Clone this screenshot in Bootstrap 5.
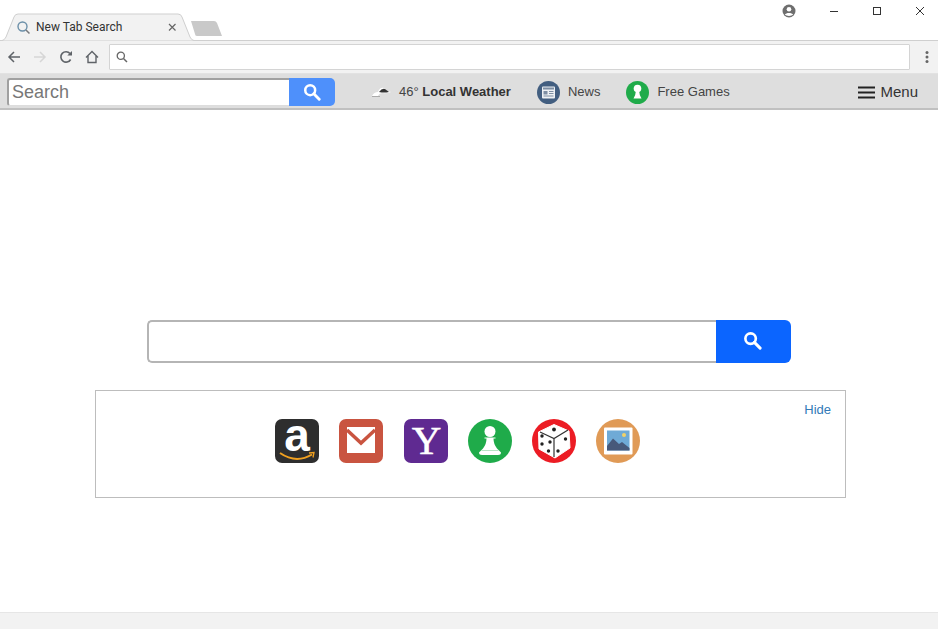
<!DOCTYPE html>
<html lang="en">
<head>
<meta charset="utf-8">
<title>New Tab Search</title>
<link href="https://cdn.jsdelivr.net/npm/bootstrap@5.3.0/dist/css/bootstrap.min.css" rel="stylesheet">
<style>
html,body{height:100%;overflow:hidden}
body{font-family:"Liberation Sans",Arial,sans-serif;background:#fff;color:#333;display:flex;flex-direction:column;height:629px}
.tabstrip{height:41px;position:relative;background:#fff;border-bottom:1px solid #cfcfcf;flex:none}
.tab-shape{position:absolute;left:0;top:0}
.tab-label{position:absolute;left:36px;top:20px;font:12px/14px Roboto,"Liberation Sans",sans-serif;color:#333}
.win-controls{position:absolute;right:-3px;top:0;height:22px}
.win-btn{width:43px;height:22px;display:flex;align-items:center;justify-content:center}
.win-profile{width:40px;margin-right:3px}
.chrome-bar{height:33px;background:#f2f2f2;flex:none;border-bottom:1px solid #e2e2e2;padding-left:1px}
.nav-ico{width:26px;height:32px;display:flex;align-items:center;justify-content:center;flex:none}
.omnibox{height:26px;flex:1 1 auto;background:#fff;border:1px solid #d4d4d4;border-radius:1px;margin-left:4px;padding-left:6px}
.kebab{width:28px;flex:none;padding-left:6px}
.ext-bar{height:36px;background:#dedede;border-bottom:2px solid #c0c0c0;flex:none;padding:2px 0 0 7px}
.ext-search{width:328px;height:28px;flex:none}
.ext-input{width:282px;height:28px;flex:none;border:2px solid #a0a0a0;border-right:0;border-bottom:1px solid #ddd;border-radius:3px 0 0 3px;background:#fff;font-size:18px;line-height:24px;padding:0 3px;color:#777}
.ext-input::placeholder{color:#777;opacity:1}
.ext-btn{width:46px;height:28px;background:#4e90fb;border:0;border-radius:0 5px 5px 0;padding:0}
.ext-link{font-size:13px;color:#444;white-space:nowrap}
.ext-link b{color:#333}
.weather{margin-left:36px}
.news{margin-left:26px}
.games{margin-left:26px}
.menu-btn{margin-left:auto;margin-right:20px;font-size:15px;color:#333}
.menu-btn svg{margin-right:5px}
.stage{flex:1 1 auto;padding-top:210px}
.big-search{width:644px;height:43px;margin-left:147px}
.big-input{flex:1 1 auto;border:2px solid #b5b5b5;border-right:0;border-radius:5px 0 0 5px;background:#fff}
.big-btn{width:75px;background:#0b65ff;border:0;border-radius:0 6px 6px 0;padding:0 3px 2px 0}
.shortcut-box{width:751px;height:108px;margin:27px 0 0 95px;border:1px solid #bdbdbd;padding:11px 14px 0 179px}
.shortcut-row{margin-top:17px;gap:20.3px}
.shortcut-row svg{overflow:visible}
.hide-link{font-size:13px;color:#337ab7;text-decoration:none;line-height:16px}
.foot-strip{height:17px;background:#f2f2f2;border-top:1px solid #e6e6e6;flex:none}
</style>
</head>
<body>
<div class="tabstrip">
  <svg class="tab-shape" width="230" height="41" viewBox="0 0 230 41">
    <path d="M1 41 Q5 40 6 37 L14 17 Q15 14 18 14 L178 14 Q181 14 182 17 L190 37 Q191 40 195 41 Z" fill="#f2f2f2" stroke="#cfcfcf"/>
    <path d="M191 21 H214 Q216 21 217 23 L222 36 H197 Q195 36 195 34 Z" fill="#c9c9c9"/>
    <circle cx="22.500" cy="26.500" r="4.500" fill="none" stroke="#6b8fa8" stroke-width="1.400"/>
    <path d="M26 30 L29.500 33.500" stroke="#77797c" stroke-width="1.500"/>
    <path d="M169 24 L175.500 30.500 M175.500 24 L169 30.500" stroke="#666" stroke-width="1.200"/>
  </svg>
  <span class="tab-label">New Tab Search</span>
  <div class="win-controls d-flex">
    <div class="win-btn win-profile">
      <svg width="14" height="14" viewBox="0 0 14 14"><circle cx="7" cy="7" r="6.500" fill="#6e6e6e"/><circle cx="7" cy="5.300" r="2.300" fill="#fff"/><path d="M2.800 10.600 C4 8.300 10 8.300 11.200 10.600 C9.500 12.400 4.500 12.400 2.800 10.600Z" fill="#fff"/></svg>
    </div>
    <div class="win-btn"><svg width="10" height="10"><path d="M1 5.500H9" stroke="#333"/></svg></div>
    <div class="win-btn"><svg width="10" height="10"><rect x="1.500" y="1.500" width="7" height="7" fill="none" stroke="#333"/></svg></div>
    <div class="win-btn"><svg width="10" height="10"><path d="M1 1L9 9M9 1L1 9" stroke="#333"/></svg></div>
  </div>
</div>

<div class="chrome-bar d-flex align-items-center">
  <div class="nav-ico"><svg width="14" height="14" viewBox="0 0 14 14"><path d="M13 7H2M7 2L2 7L7 12" fill="none" stroke="#5f6368" stroke-width="1.500"/></svg></div>
  <div class="nav-ico"><svg width="14" height="14" viewBox="0 0 14 14"><path d="M1 7H12M7 2L12 7L7 12" fill="none" stroke="#d6d6d6" stroke-width="1.500"/></svg></div>
  <div class="nav-ico"><svg width="14" height="14" viewBox="0 0 14 14"><path d="M11.600 9.500A5.200 5.200 0 1 1 11 3.500" fill="none" stroke="#5f6368" stroke-width="1.600"/><path d="M8.300 5.500H13V1Z" fill="#5f6368"/></svg></div>
  <div class="nav-ico"><svg width="14" height="14" viewBox="0 0 14 14"><path d="M1 7.500L7 1.500L13 7.500M3 6V12.500H11V6" fill="none" stroke="#5f6368" stroke-width="1.400"/></svg></div>
  <div class="omnibox d-flex align-items-center">
    <svg width="12" height="12" viewBox="0 0 12 12"><circle cx="4.800" cy="4.800" r="3.600" fill="none" stroke="#666" stroke-width="1.300"/><path d="M7.500 7.500L11 11" stroke="#666" stroke-width="1.500"/></svg>
  </div>
  <div class="kebab d-flex justify-content-center"><svg width="4" height="14"><circle cx="2" cy="2.500" r="1.500" fill="#666"/><circle cx="2" cy="7" r="1.500" fill="#666"/><circle cx="2" cy="11.500" r="1.500" fill="#666"/></svg></div>
</div>

<div class="ext-bar d-flex align-items-center">
  <div class="ext-search d-flex">
    <input class="ext-input" type="text" placeholder="Search" aria-label="Search">
    <button class="ext-btn btn d-flex align-items-center justify-content-center" type="button" aria-label="Search">
      <svg width="18" height="18" viewBox="0 0 20 20"><circle cx="8" cy="8" r="5.500" fill="none" stroke="#fff" stroke-width="2.800"/><path d="M12 12L18 18" stroke="#fff" stroke-width="3.200" stroke-linecap="round"/></svg>
    </button>
  </div>
  <div class="ext-link weather d-flex align-items-center">
    <svg class="me-2" width="20" height="12" viewBox="0 0 20 12"><path d="M1 10 Q3 6 7 6 Q9 1 13 2 Q15 3 16 5 L20 6 Q15 8 12 7 Q8 7 7 10Z" fill="#fff"/><path d="M8 6 Q11 2 14 3 L18 6 Q13 7 8 6Z" fill="#333"/><path d="M1 10.500H9" stroke="#aaa"/></svg>
    <span>46° <b>Local Weather</b></span>
  </div>
  <div class="ext-link news d-flex align-items-center">
    <svg class="me-2" width="23" height="23" viewBox="0 0 23 23"><circle cx="11.500" cy="11.500" r="11.500" fill="#425e80"/><rect x="5" y="5.500" width="13" height="12" rx="1" fill="#eef1f4"/><rect x="6" y="6.500" width="11" height="2" fill="#7d8ea3"/><rect x="6.500" y="10" width="4" height="3.500" fill="#7d8ea3"/><path d="M12 10.500H16.500M12 12.500H16.500M6.500 15H16.500" stroke="#7d8ea3"/></svg>
    <span>News</span>
  </div>
  <div class="ext-link games d-flex align-items-center">
    <svg class="me-2" width="23" height="23" viewBox="0 0 23 23"><circle cx="11.500" cy="11.500" r="11.500" fill="#1fab4a"/><circle cx="11.500" cy="7.500" r="3.800" fill="#fff"/><path d="M9.800 10.500H13.200Q13.300 14 15.500 17.500H7.500Q9.700 14 9.800 10.500Z" fill="#fff"/></svg>
    <span>Free Games</span>
  </div>
  <div class="menu-btn d-flex align-items-center">
    <svg width="17" height="13" viewBox="0 0 17 13"><path d="M0 1.500H17M0 6.500H17M0 11.500H17" stroke="#222" stroke-width="2.200"/></svg>
    <span>Menu</span>
  </div>
</div>

<main class="stage">
  <div class="big-search d-flex">
    <input class="big-input" type="text" aria-label="Search">
    <button class="big-btn btn d-flex align-items-center justify-content-center" type="button" aria-label="Search">
      <svg width="19" height="19" viewBox="0 0 20 20"><circle cx="8" cy="8" r="5.500" fill="none" stroke="#fff" stroke-width="2.800"/><path d="M12 12L18 18" stroke="#fff" stroke-width="3.200" stroke-linecap="round"/></svg>
    </button>
  </div>

  <div class="shortcut-box d-flex justify-content-between align-items-start">
    <div class="shortcut-row d-flex">
      <svg width="44" height="44" viewBox="0 0 44 44"><rect width="44" height="44" rx="7" fill="#2e2e2e"/><text x="22" y="31.500" text-anchor="middle" font-family="Liberation Sans" font-weight="700" font-size="46" fill="#fff">a</text><path d="M5 34 Q21 45 37 35.500" fill="none" stroke="#f0a020" stroke-width="2"/><path d="M34 34L39 33.500L38 38.500" fill="none" stroke="#f0a020" stroke-width="1.300"/></svg>
      <svg width="44" height="44" viewBox="0 0 44 44"><rect width="44" height="44" rx="7" fill="#c95440"/><path d="M8 8H36V34H8Z" fill="#fff"/><path d="M8 11 L22 24 L36 11" fill="none" stroke="#c95440" stroke-width="3.500"/></svg>
      <svg width="44" height="44" viewBox="0 0 44 44"><rect width="44" height="44" rx="7" fill="#5f2a91"/><text x="22.500" y="34.500" text-anchor="middle" font-family="Liberation Serif" font-size="41" fill="#fff" stroke="#fff" stroke-width=".5">Y</text></svg>
      <svg width="44" height="44" viewBox="0 0 44 44"><circle cx="22" cy="22" r="22" fill="#1fab4a"/><circle cx="22" cy="12.500" r="5.500" fill="#fff"/><path d="M16.500 18.500H27.500V19.500H25.500Q25.500 25 29 29.500L33 33.500Q33 36 30 36H14Q11 36 11 33.500L15 29.500Q18.500 25 18.500 19.500H16.500Z" fill="#fff"/><path d="M13.500 31.500H30.500" stroke="#b7e4c5"/></svg>
      <svg width="44" height="44" viewBox="0 0 44 44"><circle cx="22" cy="22" r="22" fill="#ec1c24"/><path d="M22 5.500 L37 12 L38 29 L23 39 L7 30 L6.500 13 Z" fill="#fff" stroke="#fff" stroke-linejoin="round"/><path d="M8 13 L22 19.500 L36 11 M22 19.500 V38" fill="none" stroke="#333" stroke-width="1.200"/><circle cx="22" cy="10.500" r="1.900" fill="#222"/><circle cx="10" cy="17" r="1.700" fill="#222"/><circle cx="18" cy="23" r="1.700" fill="#222"/><circle cx="10" cy="25" r="1.700" fill="#222"/><circle cx="16.500" cy="32" r="1.700" fill="#222"/><circle cx="33.500" cy="20" r="1.700" fill="#222"/><circle cx="26" cy="32" r="1.700" fill="#222"/></svg>
      <svg width="44" height="44" viewBox="0 0 44 44"><circle cx="22" cy="22" r="22" fill="#e09a56"/><rect x="8" y="8.500" width="28.500" height="27" rx="1" fill="#fff"/><rect x="11" y="11.500" width="22.500" height="20" fill="#6faad6"/><circle cx="28" cy="16" r="2" fill="#f3d267"/><path d="M11 31.500V27L17 19.500L23 25L26 23L33.500 29V31.500Z" fill="#47597a"/></svg>
    </div>
    <a class="hide-link" href="#">Hide</a>
  </div>
</main>

<div class="foot-strip"></div>
<script src="https://cdn.jsdelivr.net/npm/bootstrap@5.3.0/dist/js/bootstrap.bundle.min.js"></script>
</body>
</html>
